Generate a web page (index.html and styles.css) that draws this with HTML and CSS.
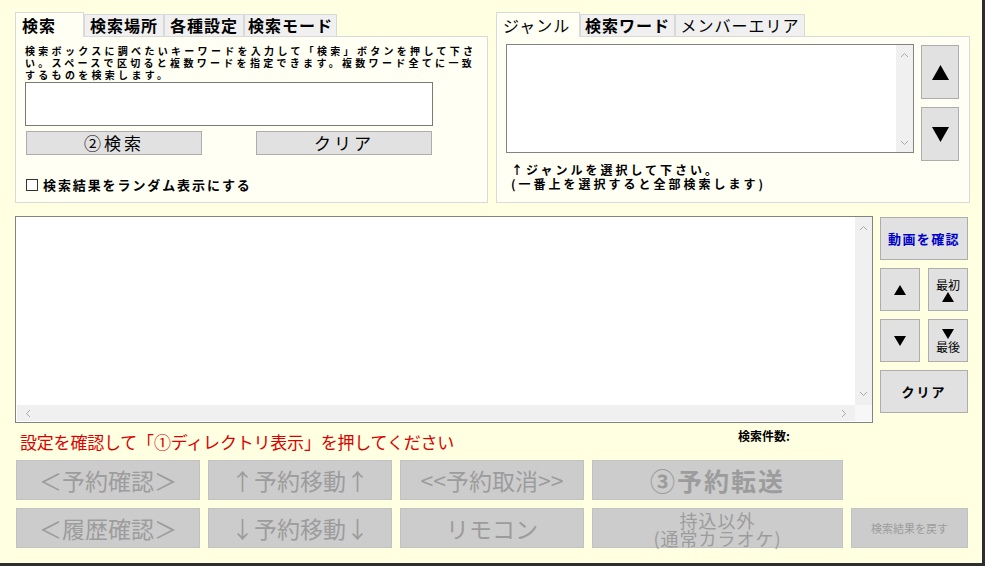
FILE: index.html
```html
<!DOCTYPE html>
<html lang="ja">
<head>
<meta charset="utf-8">
<title>検索</title>
<link rel="stylesheet" href="styles.css">
</head>
<body>
<div class="window">
  <div class="top">
    <section class="panel panel-left">
      <div class="tabs">
        <div class="tab active w69">検索</div>
        <div class="tab w80">検索場所</div>
        <div class="tab w80">各種設定</div>
        <div class="tab w93">検索モード</div>
      </div>
      <div class="panel-body search-body">
        <p class="hint">検索ボックスに調べたいキーワードを入力して「検索」ボタンを押して下さ<br>い。スペースで区切ると複数ワードを指定できます。複数ワード全てに一致<br>するものを検索します。</p>
        <div class="textbox"></div>
        <div class="btn-row">
          <div class="btn wide">②検索</div>
          <div class="btn wide">クリア</div>
        </div>
        <div class="check"><span class="box"></span><span class="check-label">検索結果をランダム表示にする</span></div>
      </div>
    </section>
    <section class="panel panel-right">
      <div class="tabs">
        <div class="tab active light w84">ジャンル</div>
        <div class="tab w95">検索ワード</div>
        <div class="tab light w130">メンバーエリア</div>
      </div>
      <div class="panel-body genre-body">
        <div class="genre-row">
          <div class="listbox genre-list">
            <div class="list-content"></div>
            <div class="vscroll">
              <svg width="9" height="6" viewBox="0 0 9 6"><polyline points="1,5 4.5,1.5 8,5" fill="none" stroke="#a8a8a8" stroke-width="1"/></svg>
              <svg width="9" height="6" viewBox="0 0 9 6"><polyline points="1,1 4.5,4.5 8,1" fill="none" stroke="#a8a8a8" stroke-width="1"/></svg>
            </div>
          </div>
          <div class="genre-buttons">
            <div class="btn tall"><svg width="17" height="15" viewBox="0 0 17 15"><polygon points="8.5,0 17,15 0,15" fill="#000"/></svg></div>
            <div class="btn tall"><svg width="17" height="15" viewBox="0 0 17 15"><polygon points="0,0 17,0 8.5,15" fill="#000"/></svg></div>
          </div>
        </div>
        <p class="genre-hint">↑ジャンルを選択して下さい。<br>(一番上を選択すると全部検索します)</p>
      </div>
    </section>
  </div>

  <div class="middle">
    <div class="listbox main-list">
      <div class="list-content"></div>
      <div class="vscroll main-v">
        <svg width="9" height="6" viewBox="0 0 9 6"><polyline points="1,5 4.5,1.5 8,5" fill="none" stroke="#a8a8a8" stroke-width="1"/></svg>
        <svg width="9" height="6" viewBox="0 0 9 6"><polyline points="1,1 4.5,4.5 8,1" fill="none" stroke="#a8a8a8" stroke-width="1"/></svg>
      </div>
      <div class="hscroll">
        <svg width="6" height="9" viewBox="0 0 6 9"><polyline points="5,1 1.5,4.5 5,8" fill="none" stroke="#a8a8a8" stroke-width="1"/></svg>
        <svg width="6" height="9" viewBox="0 0 6 9"><polyline points="1,1 4.5,4.5 1,8" fill="none" stroke="#a8a8a8" stroke-width="1"/></svg>
      </div>
      <div class="corner"></div>
    </div>
    <div class="side">
      <div class="btn side-btn span2 blue">動画を確認</div>
      <div class="btn side-btn"><svg width="12" height="10" viewBox="0 0 12 10"><polygon points="6,0 12,10 0,10" fill="#000"/></svg></div>
      <div class="btn side-btn stack"><span class="small">最初</span><svg width="12" height="10" viewBox="0 0 12 10"><polygon points="6,0 12,10 0,10" fill="#000"/></svg></div>
      <div class="btn side-btn"><svg width="12" height="10" viewBox="0 0 12 10"><polygon points="0,0 12,0 6,10" fill="#000"/></svg></div>
      <div class="btn side-btn stack"><svg width="12" height="10" viewBox="0 0 12 10"><polygon points="0,0 12,0 6,10" fill="#000"/></svg><span class="small">最後</span></div>
      <div class="btn side-btn span2 bold">クリア</div>
    </div>
  </div>

  <div class="status">
    <p class="notice">設定を確認して「①ディレクトリ表示」を押してください</p>
    <p class="count">検索件数:</p>
  </div>

  <div class="actions">
    <div class="dbtn">＜予約確認＞</div>
    <div class="dbtn">↑予約移動↑</div>
    <div class="dbtn">&lt;&lt;予約取消&gt;&gt;</div>
    <div class="dbtn big">③予約転送</div>
    <div class="empty"></div>
    <div class="dbtn">＜履歴確認＞</div>
    <div class="dbtn">↓予約移動↓</div>
    <div class="dbtn">リモコン</div>
    <div class="dbtn two">持込以外<br>(通常カラオケ)</div>
    <div class="dbtn tiny">検索結果を戻す</div>
  </div>
</div>
</body>
</html>
```

FILE: styles.css
```css
* {
  box-sizing: border-box;
  margin: 0;
  padding: 0;
}

html, body {
  width: 985px;
  height: 566px;
  overflow: hidden;
}

body {
  font-family: "Noto Sans CJK JP", "Noto Sans", sans-serif;
  background: #ffffe1;
  color: #000;
}

.window {
  width: 985px;
  height: 566px;
  background: #ffffe1;
  border-right: 3px solid #2e2e2e;
  border-bottom: 3px solid #2e2e2e;
  padding: 12px 0 0 15px;
}

/* ---------- top panels ---------- */
.top {
  display: flex;
  gap: 8px;
  height: 191px;
}

.panel {
  display: flex;
  flex-direction: column;
}

.panel-left { width: 473px; }
.panel-right { width: 474px; }

.tabs {
  display: flex;
  align-items: flex-end;
  height: 24px;
  position: relative;
  z-index: 1;
}

.tab {
  height: 22px;
  background: #f0f0f0;
  border: 1px solid #d9d9d9;
  border-bottom: none;
  font-size: 16px;
  font-weight: 700;
  line-height: 21px;
  letter-spacing: 1px;
  text-align: center;
  white-space: nowrap;
}

.tab.active {
  height: 25px;
  margin-bottom: -1px;
  background: #fffff4;
  line-height: 24px;
  text-align: left;
  padding-left: 6px;
}

.tab.light { font-weight: 400; }

.w69 { width: 69px; }
.w80 { width: 80px; }
.w84 { width: 84px; }
.w93 { width: 93px; }
.w95 { width: 95px; }
.w130 { width: 130px; }

.panel-body {
  height: 167px;
  border: 1px solid #d9d9d9;
  background: #fffff4;
}

.search-body {
  padding: 8px 9px;
}

.hint {
  font-size: 10px;
  font-weight: 700;
  line-height: 12px;
  height: 36px;
  letter-spacing: 3.3px;
  white-space: nowrap;
}

.textbox {
  width: 408px;
  height: 44px;
  margin-top: 1px;
  background: #fff;
  border: 1px solid #7a7a7a;
}

.btn-row {
  display: flex;
  gap: 54px;
  margin-top: 5px;
  margin-left: 1px;
}

.btn {
  background: #e1e1e1;
  border: 1px solid #adadad;
  display: flex;
  align-items: center;
  justify-content: center;
}

.btn.wide {
  width: 176px;
  height: 24px;
  font-size: 17px;
  letter-spacing: 3px;
  line-height: 22px;
}

.check {
  display: flex;
  align-items: center;
  gap: 5px;
  margin-top: 23px;
  margin-left: 1px;
  height: 13px;
}

.box {
  width: 12px;
  height: 12px;
  border: 1px solid #333;
  background: #fff;
}

.check-label {
  font-size: 13px;
  font-weight: 700;
  letter-spacing: 1.9px;
  line-height: 13px;
}

/* ---------- genre panel ---------- */
.genre-body {
  padding: 7px 10px 0 9px;
}

.genre-row {
  display: flex;
  align-items: flex-start;
  gap: 7px;
  height: 117px;
}

.listbox {
  background: #fff;
  border: 1px solid #838383;
}

.genre-list {
  width: 408px;
  height: 109px;
  display: flex;
}

.list-content {
  flex: 1;
}

.vscroll {
  width: 17px;
  background: #f0f0f0;
  display: flex;
  flex-direction: column;
  align-items: center;
  justify-content: space-between;
  padding: 7px 0 6px;
}

.genre-buttons {
  display: flex;
  flex-direction: column;
  gap: 8px;
  margin-top: 1px;
}

.btn.tall {
  width: 38px;
  height: 54px;
}

.genre-hint {
  font-size: 12px;
  font-weight: 700;
  line-height: 14px;
  letter-spacing: 3px;
  margin-left: 5px;
  margin-top: 2px;
  white-space: nowrap;
}

/* ---------- middle ---------- */
.middle {
  display: flex;
  gap: 7px;
  margin-top: 13px;
  height: 207px;
}

.main-list {
  width: 858px;
  height: 207px;
  display: grid;
  grid-template-columns: 1fr 17px;
  grid-template-rows: 1fr 16px;
  padding: 0 0 1px 1px;
}

.main-v {
  padding: 8px 0 8px;
}

.hscroll {
  background: #f0f0f0;
  display: flex;
  align-items: center;
  justify-content: space-between;
  padding: 0 8px 0 8px;
}

.corner {
  background: #f7f7f7;
}

.side {
  width: 88px;
  margin-top: 1px;
  display: grid;
  grid-template-columns: 40px 40px;
  grid-auto-rows: 43px;
  gap: 8px;
  align-content: start;
}

.side-btn.span2 { grid-column: span 2; }

.side-btn.blue {
  color: #0000cc;
  font-size: 13px;
  font-weight: 700;
  letter-spacing: 1.4px;
}

.side-btn.bold {
  font-size: 13px;
  font-weight: 700;
  letter-spacing: 2px;
}

.side-btn.stack {
  flex-direction: column;
  gap: 1px;
}

.small {
  font-size: 12px;
  line-height: 13px;
}

/* ---------- status ---------- */
.status {
  display: grid;
  grid-template-columns: 723px auto;
  margin-top: 6px;
  height: 26px;
}

.notice {
  color: #dc0000;
  font-size: 17px;
  line-height: 26px;
  padding-left: 5px;
  white-space: nowrap;
  letter-spacing: -0.2px;
}

.count {
  font-size: 12px;
  font-weight: 700;
  line-height: 14px;
}

/* ---------- actions ---------- */
.actions {
  display: grid;
  grid-template-columns: 184px 184px 184px 251px 117px;
  grid-template-rows: 40px 40px;
  gap: 8px;
  margin-top: 5px;
  margin-left: 1px;
}

.dbtn {
  background: #cccccc;
  border: 1px solid #c2c2c2;
  color: #9c9c9c;
  font-size: 23px;
  font-weight: 400;
  display: flex;
  align-items: center;
  justify-content: center;
  text-align: center;
  white-space: nowrap;
  line-height: 1;
}

.dbtn.big {
  font-size: 25px;
  font-weight: 700;
  letter-spacing: 2px;
}

.dbtn.two {
  font-size: 18px;
  line-height: 18px;
  letter-spacing: 1px;
  padding-top: 2px;
}

.dbtn.tiny {
  font-size: 11px;
}
```
